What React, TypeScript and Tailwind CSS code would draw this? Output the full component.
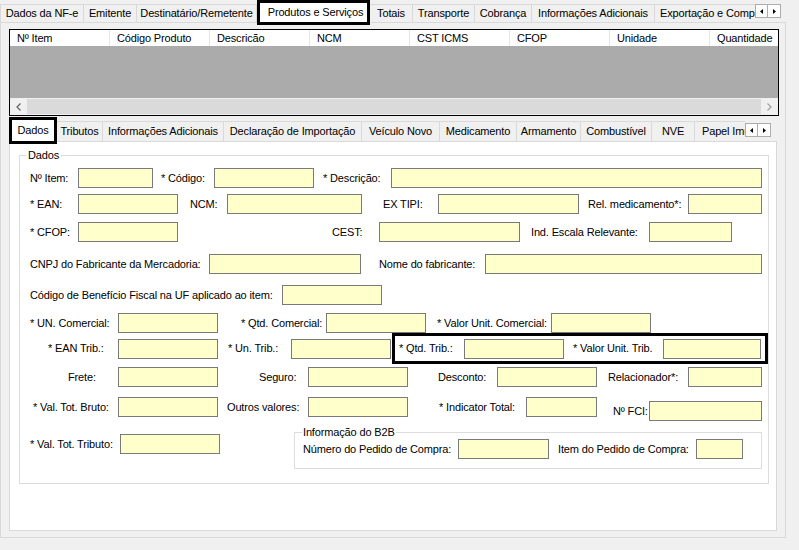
import React from 'react';

// WinForms style NF-e item editor

interface TabDef {
  label: string;
  w: string;
}

const OUTER_LEFT: TabDef[] = [
  { label: 'Dados da NF-e', w: 'w-[84px] border-l' },
  { label: 'Emitente', w: 'w-[53px]' },
  { label: 'Destinatário/Remetente', w: 'w-[120px]' },
];

const OUTER_RIGHT: TabDef[] = [
  { label: 'Totais', w: 'w-[43px]' },
  { label: 'Transporte', w: 'w-[62px]' },
  { label: 'Cobrança', w: 'w-[57px]' },
  { label: 'Informações Adicionais', w: 'w-[123px]' },
];

const INNER_TABS: TabDef[] = [
  { label: 'Tributos', w: 'w-[46px]' },
  { label: 'Informações Adicionais', w: 'w-[121px]' },
  { label: 'Declaração de Importação', w: 'w-[138px]' },
  { label: 'Veículo Novo', w: 'w-[78px]' },
  { label: 'Medicamento', w: 'w-[77px]' },
  { label: 'Armamento', w: 'w-[64px]' },
  { label: 'Combustível', w: 'w-[71px]' },
  { label: 'NVE', w: 'w-[43px]' },
];

const COLUMNS = ['Nº Item', 'Código Produto', 'Descricão', 'NCM', 'CST ICMS', 'CFOP', 'Unidade', 'Quantidade'];

const Tab: React.FC<{ t: TabDef; h: string }> = ({ t, h }) => (
  <div
    className={`${t.w} ${h} shrink-0 flex items-center justify-center whitespace-nowrap overflow-hidden border-t border-r border-[#d9d9d9] bg-[#f0f0f0]`}
  >
    {t.label}
  </div>
);

const Arrows: React.FC<{ className: string }> = ({ className }) => (
  <div className={`flex shrink-0 ${className}`}>
    <div className="w-[13px] h-[14px] border border-[#adadad] bg-[#fdfdfd] flex items-center justify-center">
      <svg width="3" height="5" viewBox="0 0 3 5">
        <path d="M3 0 L0 2.5 L3 5 Z" fill="#000" />
      </svg>
    </div>
    <div className="w-[13px] h-[14px] border border-l-0 border-[#adadad] bg-[#fdfdfd] flex items-center justify-center">
      <svg width="3" height="5" viewBox="0 0 3 5">
        <path d="M0 0 L3 2.5 L0 5 Z" fill="#000" />
      </svg>
    </div>
  </div>
);

// label cell + yellow text box
const F: React.FC<{ l: string; lc: string; bc: string }> = ({ l, lc, bc }) => (
  <>
    <span className={`shrink-0 whitespace-nowrap ${lc}`}>{l}</span>
    <div className={`h-[20px] shrink-0 border border-[#7a7a7a] bg-[#ffffcc] ${bc}`} />
  </>
);

const Row: React.FC<{ className: string; children: React.ReactNode }> = ({ className, children }) => (
  <div className={`flex items-center ${className}`}>{children}</div>
);

export default function App() {
  return (
    <div className="w-[799px] h-[550px] overflow-hidden bg-[#f0f0f0] text-black text-[11px] tracking-[-0.15px] font-['Liberation_Sans',Arial,sans-serif]">
      {/* outer tab strip */}
      <div className="flex items-end h-[22px]">
        {OUTER_LEFT.map(t => (
          <Tab key={t.label} t={t} h="h-[18px]" />
        ))}
        <div className="relative z-10 w-[113px] h-[25px] mb-[-3px] shrink-0 border-[3px] border-black bg-white flex items-center justify-center pl-[4px] whitespace-nowrap">
          Produtos e Serviços
        </div>
        {OUTER_RIGHT.map(t => (
          <Tab key={t.label} t={t} h="h-[18px]" />
        ))}
        <div className="w-[100px] h-[18px] shrink-0 flex items-center pl-[5px] whitespace-nowrap overflow-hidden border-t border-[#d9d9d9] bg-[#f0f0f0]">
          Exportação e Compra
        </div>
        <Arrows className="self-start mt-[4px]" />
      </div>

      {/* outer tab page */}
      <div className="w-[786px] h-[516px] border border-[#d9d9d9] bg-[#f0f0f0]">
        {/* item grid */}
        <div className="ml-[8px] mt-[6px] w-[770px] h-[87px] border border-black flex flex-col bg-[#ababab]">
          <div className="h-[16px] bg-white flex overflow-hidden">
            {COLUMNS.map(c => (
              <div
                key={c}
                className="w-[100px] shrink-0 h-full pl-[7px] flex items-center whitespace-nowrap border-r border-[#e5e5e5]"
              >
                {c}
              </div>
            ))}
          </div>
          <div className="flex-1" />
          <div className="h-[17px] bg-[#f0f0f0] flex items-center">
            <div className="w-[17px] h-full flex items-center justify-center">
              <svg width="5" height="8" viewBox="0 0 5 8">
                <path d="M4.5 0.5 L1 4 L4.5 7.5" fill="none" stroke="#606060" strokeWidth="1.2" />
              </svg>
            </div>
            <div className="flex-1 h-[15px] bg-[#dadada]" />
            <div className="w-[17px] h-full flex items-center justify-center">
              <svg width="5" height="8" viewBox="0 0 5 8">
                <path d="M0.5 0.5 L4 4 L0.5 7.5" fill="none" stroke="#a0a0a0" strokeWidth="1.2" />
              </svg>
            </div>
          </div>
        </div>

        {/* inner tab control */}
        <div className="ml-[8px] mt-[1px] w-[768px]">
          <div className="flex items-end h-[24px]">
            <div className="relative z-10 w-[48px] h-[27px] mb-[-3px] shrink-0 border-[3px] border-black bg-white flex items-center justify-center">
              Dados
            </div>
            {INNER_TABS.map(t => (
              <Tab key={t.label} t={t} h="h-[20px]" />
            ))}
            <div className="w-[50px] h-[20px] shrink-0 flex items-center pl-[7px] whitespace-nowrap overflow-hidden border-t border-[#d9d9d9] bg-[#f0f0f0]">
              Papel Imune
            </div>
            <Arrows className="mb-[4px]" />
          </div>

          <div className="h-[390px] border border-[#d9d9d9] bg-white pt-[7px]">
            <fieldset className="ml-[9px] w-[749px] border border-[#dcdcdc] pb-[14px]">
              <legend className="ml-[6px] px-[2px] leading-[13px]">Dados</legend>

              <Row className="mt-[6px] h-[20px]">
                <F l="Nº Item:" lc="w-[58px] pl-[10px]" bc="w-[75px]" />
                <F l="* Código:" lc="w-[61px] pl-[8px]" bc="w-[100px]" />
                <F l="* Descrição:" lc="w-[77px] pl-[9px]" bc="w-[371px]" />
              </Row>

              <Row className="mt-[6px] h-[20px]">
                <F l="* EAN:" lc="w-[58px] pl-[10px]" bc="w-[100px]" />
                <F l="NCM:" lc="w-[49px] pl-[12px]" bc="w-[135px]" />
                <F l="EX TIPI:" lc="w-[76px] pl-[21px]" bc="w-[141px]" />
                <F l="Rel. medicamento*:" lc="w-[109px] pl-[9px]" bc="w-[74px]" />
              </Row>

              <Row className="mt-[8px] h-[20px]">
                <F l="* CFOP:" lc="w-[58px] pl-[10px]" bc="w-[100px]" />
                <F l="CEST:" lc="w-[201px] pl-[154px]" bc="w-[141px]" />
                <F l="Ind. Escala Relevante:" lc="w-[129px] pl-[11px]" bc="w-[83px]" />
              </Row>

              <Row className="mt-[12px] h-[20px]">
                <F l="CNPJ do Fabricante da Mercadoria:" lc="w-[189px] pl-[10px]" bc="w-[152px]" />
                <F l="Nome do fabricante:" lc="w-[124px] pl-[18px]" bc="w-[277px]" />
              </Row>

              <Row className="mt-[11px] h-[20px]">
                <F l="Código de Benefício Fiscal na UF aplicado ao item:" lc="w-[262px] pl-[10px]" bc="w-[100px]" />
              </Row>

              <Row className="mt-[8px] h-[20px]">
                <F l="* UN. Comercial:" lc="w-[98px] pl-[10px]" bc="w-[100px]" />
                <F l="* Qtd. Comercial:" lc="w-[108px] pl-[23px]" bc="w-[100px]" />
                <F l="* Valor Unit. Comercial:" lc="w-[125px] pl-[11px]" bc="w-[100px]" />
              </Row>

              <Row className="h-[31px]">
                <F l="* EAN Trib.:" lc="w-[98px] pl-[28px]" bc="w-[100px]" />
                <F l="* Un. Trib.:" lc="w-[73px] pl-[10px]" bc="w-[100px]" />
                <div className="ml-[1px] w-[376px] h-[31px] border-[3px] border-black flex items-center">
                  <F l="* Qtd. Trib.:" lc="w-[69px] pl-[4px]" bc="w-[100px]" />
                  <F l="* Valor Unit. Trib." lc="w-[99px] pl-[9px]" bc="w-[98px]" />
                </div>
              </Row>

              <Row className="mt-[3px] h-[20px]">
                <F l="Frete:" lc="w-[98px] pl-[48px]" bc="w-[100px]" />
                <F l="Seguro:" lc="w-[90px] pl-[41px]" bc="w-[100px]" />
                <F l="Desconto:" lc="w-[89px] pl-[30px]" bc="w-[100px]" />
                <F l="Relacionador*:" lc="w-[91px] pl-[11px]" bc="w-[74px]" />
              </Row>

              <Row className="mt-[10px] h-[20px]">
                <F l="* Val. Tot. Bruto:" lc="w-[98px] pl-[13px]" bc="w-[100px]" />
                <F l="Outros valores:" lc="w-[90px] pl-[9px]" bc="w-[100px]" />
                <F l="* Indicator Total:" lc="w-[118px] pl-[31px]" bc="w-[71px]" />
                <div className="flex items-center mt-[8px]">
                  <F l="Nº FCI:" lc="w-[52px] pl-[16px]" bc="w-[113px]" />
                </div>
              </Row>

              <div className="mt-[9px] flex items-start">
                <div className="flex items-center mt-[8px]">
                  <F l="* Val. Tot. Tributo:" lc="w-[100px] pl-[10px]" bc="w-[100px]" />
                </div>
                <fieldset className="ml-[74px] w-[468px] border border-[#dcdcdc] pl-[8px] pb-[9px]">
                  <legend className="-ml-[1px] px-[1px] leading-[13px]">Informação do B2B</legend>
                  <Row className="h-[20px]">
                    <F l="Número do Pedido de Compra:" lc="w-[155px]" bc="w-[91px]" />
                    <F l="Item do Pedido de Compra:" lc="w-[147px] pl-[9px]" bc="w-[47px]" />
                  </Row>
                </fieldset>
              </div>
            </fieldset>
          </div>
        </div>
      </div>
    </div>
  );
}
